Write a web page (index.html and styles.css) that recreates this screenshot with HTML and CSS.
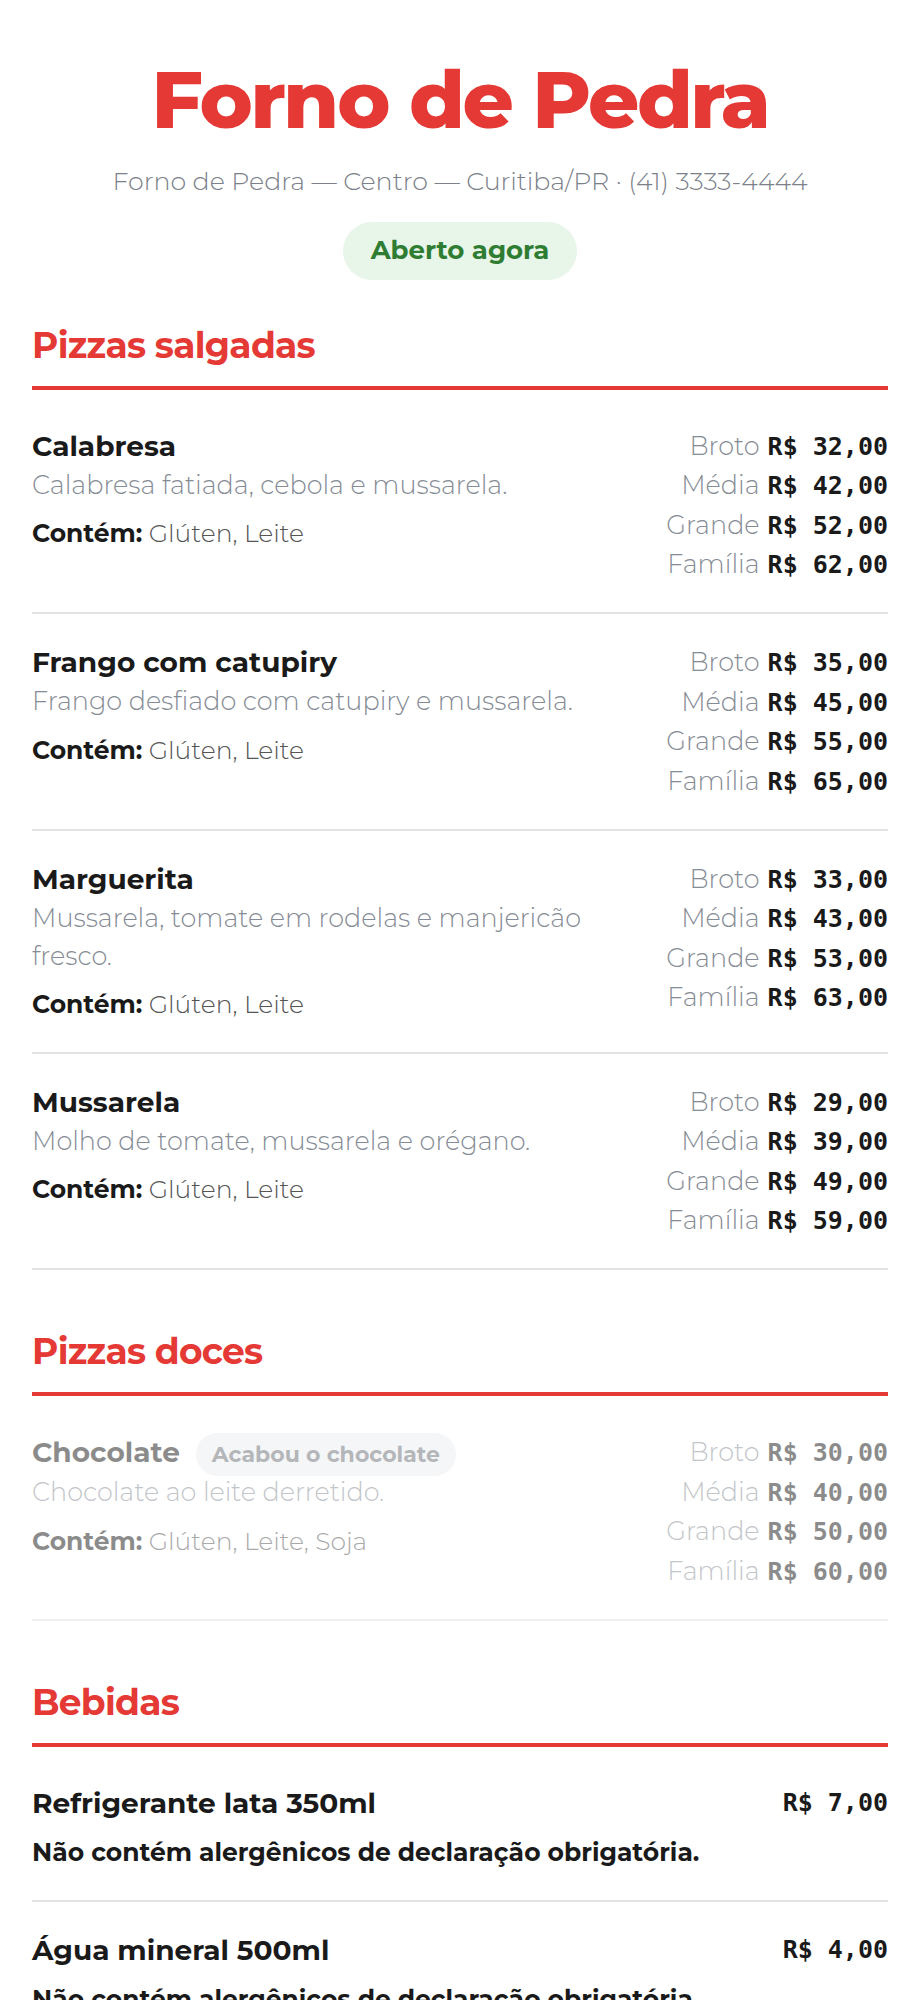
FILE: index.html
```html
<!DOCTYPE html>
<html lang="pt-BR">
<head>
  <meta charset="UTF-8" />
  <title>Forno de Pedra | Cardápio</title>
  <link rel="stylesheet" href="styles.css">
</head>
<body>

  <header class="top">
    <h1>Forno de Pedra</h1>
    <p class="info">Forno de Pedra — Centro — Curitiba/PR · (41) 3333-4444</p>
    <span class="status">Aberto agora</span>
  </header>

  <section class="cat">
    <h2>Pizzas salgadas</h2>

    <div class="item">
      <div class="main">
        <h3>Calabresa</h3>
        <p class="desc">Calabresa fatiada, cebola e mussarela.</p>
        <p class="alerg"><b>Contém:</b> Glúten, Leite</p>
      </div>
      <div class="prices">
        <div class="row"><span class="size">Broto</span><span class="val">R$ 32,00</span></div>
        <div class="row"><span class="size">Média</span><span class="val">R$ 42,00</span></div>
        <div class="row"><span class="size">Grande</span><span class="val">R$ 52,00</span></div>
        <div class="row"><span class="size">Família</span><span class="val">R$ 62,00</span></div>
      </div>
    </div>

    <div class="item">
      <div class="main">
        <h3>Frango com catupiry</h3>
        <p class="desc">Frango desfiado com catupiry e mussarela.</p>
        <p class="alerg"><b>Contém:</b> Glúten, Leite</p>
      </div>
      <div class="prices">
        <div class="row"><span class="size">Broto</span><span class="val">R$ 35,00</span></div>
        <div class="row"><span class="size">Média</span><span class="val">R$ 45,00</span></div>
        <div class="row"><span class="size">Grande</span><span class="val">R$ 55,00</span></div>
        <div class="row"><span class="size">Família</span><span class="val">R$ 65,00</span></div>
      </div>
    </div>

    <div class="item">
      <div class="main">
        <h3>Marguerita</h3>
        <p class="desc">Mussarela, tomate em rodelas e manjericão fresco.</p>
        <p class="alerg"><b>Contém:</b> Glúten, Leite</p>
      </div>
      <div class="prices">
        <div class="row"><span class="size">Broto</span><span class="val">R$ 33,00</span></div>
        <div class="row"><span class="size">Média</span><span class="val">R$ 43,00</span></div>
        <div class="row"><span class="size">Grande</span><span class="val">R$ 53,00</span></div>
        <div class="row"><span class="size">Família</span><span class="val">R$ 63,00</span></div>
      </div>
    </div>

    <div class="item">
      <div class="main">
        <h3>Mussarela</h3>
        <p class="desc">Molho de tomate, mussarela e orégano.</p>
        <p class="alerg"><b>Contém:</b> Glúten, Leite</p>
      </div>
      <div class="prices">
        <div class="row"><span class="size">Broto</span><span class="val">R$ 29,00</span></div>
        <div class="row"><span class="size">Média</span><span class="val">R$ 39,00</span></div>
        <div class="row"><span class="size">Grande</span><span class="val">R$ 49,00</span></div>
        <div class="row"><span class="size">Família</span><span class="val">R$ 59,00</span></div>
      </div>
    </div>
  </section>

  <section class="cat">
    <h2>Pizzas doces</h2>

    <div class="item off">
      <div class="main">
        <h3>Chocolate <span class="tag">Acabou o chocolate</span></h3>
        <p class="desc">Chocolate ao leite derretido.</p>
        <p class="alerg"><b>Contém:</b> Glúten, Leite, Soja</p>
      </div>
      <div class="prices">
        <div class="row"><span class="size">Broto</span><span class="val">R$ 30,00</span></div>
        <div class="row"><span class="size">Média</span><span class="val">R$ 40,00</span></div>
        <div class="row"><span class="size">Grande</span><span class="val">R$ 50,00</span></div>
        <div class="row"><span class="size">Família</span><span class="val">R$ 60,00</span></div>
      </div>
    </div>
  </section>

  <section class="cat">
    <h2>Bebidas</h2>

    <div class="item">
      <div class="main">
        <h3>Refrigerante lata 350ml</h3>
        <p class="alerg none">Não contém alergênicos de declaração obrigatória.</p>
      </div>
      <div class="prices">
        <div class="row"><span class="val">R$ 7,00</span></div>
      </div>
    </div>

    <div class="item">
      <div class="main">
        <h3>Água mineral 500ml</h3>
        <p class="alerg none">Não contém alergênicos de declaração obrigatória.</p>
      </div>
      <div class="prices">
        <div class="row"><span class="val">R$ 4,00</span></div>
      </div>
    </div>
  </section>

</body>
</html>
```

FILE: styles.css
```css
body{font-family:Montserrat, "Noto Sans", sans-serif;color:#1a1a1a;background:#fff;margin:0;padding:0 32px;}
p{margin:0;}

.top{display:flex;flex-direction:column;align-items:center;text-align:center;padding-top:57px;margin-bottom:44px;}
.top h1{font-size:80px;font-weight:800;line-height:86px;letter-spacing:-0.03em;color:#e53935;margin:0 0 20px;}
.info{font-size:25.3px;font-weight:300;line-height:36px;color:#7b8089;}
.status{margin-top:23px;padding:13px 28px;border-radius:29px;background:#e8f5e9;color:#2e7d32;font-size:26px;font-weight:700;line-height:31.6px;}

.cat{margin-bottom:60px;}
.cat h2{font-size:36px;font-weight:700;line-height:43px;letter-spacing:-0.02em;color:#e53935;margin:0 0 8px;padding-bottom:19px;border-bottom:4px solid #e53935;}

.item{display:flex;justify-content:space-between;gap:24px;padding:28px 0 28.5px;border-bottom:2px solid #e3e3e3;}
.main{flex:1;}
.main h3{font-size:28px;font-weight:700;line-height:39px;margin:1px 0 0;}
.desc{font-size:25.5px;font-weight:300;line-height:38px;color:#868c95;}
.alerg{font-size:25px;font-weight:300;line-height:38px;color:#555;margin-top:10.5px;}
.alerg b{font-weight:700;color:#1a1a1a;}
.alerg.none{font-weight:700;color:#1a1a1a;}

.prices{display:flex;flex-direction:column;}
.row{display:flex;justify-content:flex-end;align-items:baseline;gap:8px;height:39.5px;line-height:39.5px;}
.size{font-size:25.5px;font-weight:300;color:#868c95;}
.val{font-family:"DejaVu Sans Mono", monospace;font-size:25px;font-weight:700;}

.tag{display:inline-block;vertical-align:middle;margin:-3px 0 -3px 8px;padding:7px 16px;border-radius:22px;background:#eceef1;color:#6b6f76;font-size:22px;font-weight:700;line-height:29px;}
.off{opacity:.5;}
```
